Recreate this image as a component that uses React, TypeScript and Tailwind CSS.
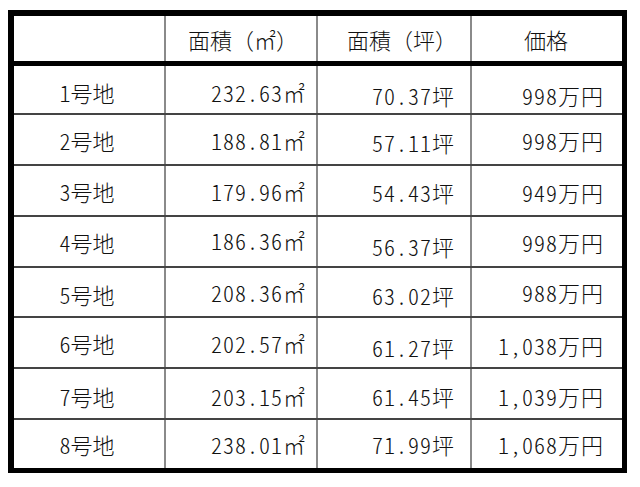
import React from 'react';

const rows = [
    { name: '1号地', area: '232.63㎡', tsubo: '70.37坪', price: '998万円', h: 'h-[49px]', off: ['translate-y-[2px]', 'translate-y-[2px]', 'translate-y-[5px]', 'translate-y-[5px]'] },
    { name: '2号地', area: '188.81㎡', tsubo: '57.11坪', price: '998万円', h: 'h-[51px]', off: ['', '', 'translate-y-[2px]', ''] },
    { name: '3号地', area: '179.96㎡', tsubo: '54.43坪', price: '949万円', h: 'h-[51px]', off: ['', '', 'translate-y-[1px]', 'translate-y-[1px]'] },
    { name: '4号地', area: '186.36㎡', tsubo: '56.37坪', price: '998万円', h: 'h-[51px]', off: ['', '-translate-y-[2px]', 'translate-y-[4px]', ''] },
    { name: '5号地', area: '208.36㎡', tsubo: '63.02坪', price: '988万円', h: 'h-[50px]', off: ['translate-y-[2px]', '', 'translate-y-[3px]', ''] },
    { name: '6号地', area: '202.57㎡', tsubo: '61.27坪', price: '1,038万円', h: 'h-[51px]', off: ['', '', 'translate-y-[4px]', 'translate-y-[2px]'] },
    { name: '7号地', area: '203.15㎡', tsubo: '61.45坪', price: '1,039万円', h: 'h-[51px]', off: ['translate-y-[2px]', 'translate-y-[2px]', 'translate-y-[2px]', 'translate-y-[2px]'] },
    { name: '8号地', area: '238.01㎡', tsubo: '71.99坪', price: '1,068万円', h: 'h-[48px]', off: ['', '', '', ''] },
];

const App = () => {
    return (
        <div
            className="min-h-[487px] w-[640px] bg-white pl-[8px] pt-[10px] text-[22px] leading-none font-light text-[#111]"
            style={{ fontFamily: '"Noto Sans CJK JP", "Noto Sans", sans-serif' }}
        >
            <div className="w-[619px] border-[6px] border-r-[5px] border-b-[5px] border-black">
                {/* header */}
                <div className="flex h-[50px] border-b-[5px] border-black">
                    <div className="w-[152px] border-r-2 border-[#8a8a8a]" />
                    <div className="flex w-[152px] items-center justify-center border-r-2 border-[#8a8a8a] pl-[4px]">面積（㎡）</div>
                    <div className="flex w-[154px] items-center justify-center border-r-2 border-[#8a8a8a] pl-[16px]">面積（坪）</div>
                    <div className="flex w-[150px] items-center justify-center pr-[2px]">価格</div>
                </div>

                {/* half-width digits, like the spreadsheet font */}
                <div className="[font-feature-settings:'hwid']">
                    {rows.map((row, i) => (
                        <div
                            key={row.name}
                            className={`flex ${row.h} ${i < rows.length - 1 ? 'border-b-2 border-[#444]' : ''}`}
                        >
                            <div className="flex w-[152px] items-center justify-center border-r-2 border-[#8a8a8a] pr-[4px]">
                                <span className={row.off[0]}>{row.name}</span>
                            </div>
                            <div className="flex w-[152px] items-center justify-end border-r-2 border-[#8a8a8a] pr-[10px]">
                                <span className={`${row.off[1]} tracking-[1px]`}>{row.area}</span>
                            </div>
                            <div className="flex w-[154px] items-center justify-end border-r-2 border-[#8a8a8a] pr-[15px]">
                                <span className={`${row.off[2]} tracking-[1px]`}>{row.tsubo}</span>
                            </div>
                            <div className="flex w-[150px] items-center justify-end pr-[18px]">
                                <span className={`${row.off[3]} tracking-[1px]`}>{row.price}</span>
                            </div>
                        </div>
                    ))}
                </div>
            </div>
        </div>
    );
};

export default App;
